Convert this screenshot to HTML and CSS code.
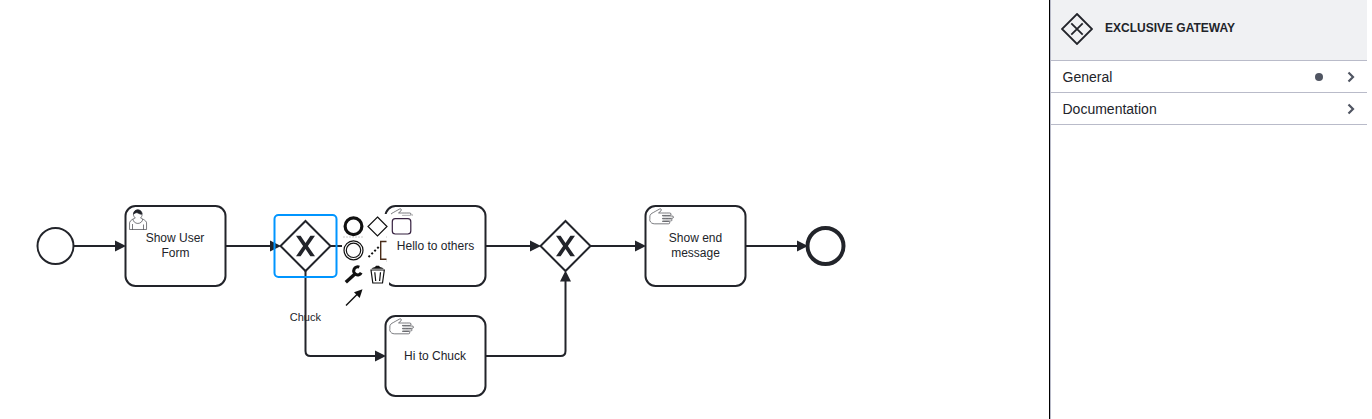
FILE: index.html
```html
<!DOCTYPE html>
<html lang="en">
<head>
<meta charset="utf-8">
<title>Process modeler</title>
<link rel="stylesheet" href="styles.css">
</head>
<body>
<div class="modeler">
<main class="canvas">
<svg class="diagram" width="1049" height="419" viewBox="0 0 1049 419">
  <defs>
    <path id="head" d="M0 -5.500 L11 0 L0 5.500 Z"/>
    <path id="hand" d="m 17,15 c 0.234,-0.01 5.604,0.008 8.029,0.004 0.808,0 1.271,-0.172 1.417,-0.752 0.227,-0.898 -0.334,-1.314 -1.338,-1.316 -2.467,-0.01 -7.886,-0.004 -8.108,-0.004 -0.014,-0.079 0.016,-0.533 0,-0.61 0.195,-0.042 8.507,0.006 9.616,0.002 0.877,-0.007 1.35,-0.438 1.353,-1.208 0.003,-0.768 -0.479,-1.09 -1.35,-1.091 -2.968,-0.002 -9.619,-0.013 -9.619,-0.013 v -0.591 c 0,0 5.052,-0.016 7.225,-0.016 0.888,-0.002 1.354,-0.416 1.351,-1.193 -0.006,-0.761 -0.492,-1.196 -1.361,-1.196 -3.473,-0.005 -10.86,-0.003 -11.083,-0.003 -0.022,-0.047 -0.045,-0.094 -0.069,-0.139 0.394,-0.319 2.041,-1.626 2.415,-2.017 0.447,-0.487 0.519,-1.165 0.162,-1.608 -0.414,-0.511 -0.973,-0.5 -1.48,-0.236 -1.461,0.764 -6.6,3.643 -7.733,4.271 -0.9,0.499 -1.516,1.253 -1.882,2.19 -0.37,0.95 -0.17,2.01 -0.166,2.979 0.004,0.718 -0.273,1.345 -0.055,2.063 0.629,2.087 2.425,3.312 4.859,3.318 4.618,0.014 9.238,-0.014 13.857,-0.016 0.755,0 1.171,-0.43 1.182,-1.184 0.011,-0.754 -0.377,-1.199 -1.14,-1.202 -1.4,-0.008 -6.084,-0.002 -6.084,-0.002 z"/>
    <path id="cross" d="M-9.500 -10.300 h4.600 L0 -3 L4.900 -10.300 h4.600 L2.400 0 L9.500 10.300 h-4.600 L0 3 L-4.900 10.300 h-4.600 L-2.400 0 Z"/>
  </defs>

  <g class="flow">
    <path d="M74 246H116M226 246H272M331 246H376M486 246H532M591 246H636M746 246H797"/>
    <path d="M305.500 271V351Q305.500 356 310.500 356H376M486 356H560.500Q565.500 356 565.500 351V280"/>
  </g>
  <g class="ink">
    <use href="#head" x="115" y="246"/>
    <use href="#head" x="270" y="246"/>
    <use href="#head" x="530" y="246"/>
    <use href="#head" x="635" y="246"/>
    <use href="#head" x="797" y="246"/>
    <use href="#head" x="375" y="356"/>
    <use href="#head" transform="translate(565.500 281.500) rotate(-90)"/>
  </g>

  <g class="shape">
    <circle cx="55.500" cy="246" r="18"/>
    <circle class="end" cx="825.500" cy="246" r="18"/>
    <rect x="125.500" y="206" width="100" height="80" rx="10"/>
    <rect x="385.500" y="206" width="100" height="80" rx="10"/>
    <rect x="385.500" y="316" width="100" height="80" rx="10"/>
    <rect x="645.500" y="206" width="100" height="80" rx="10"/>
    <path d="M305.500 221L330.500 246L305.500 271L280.500 246Z"/>
    <path d="M565.500 221L590.500 246L565.500 271L540.500 246Z"/>
  </g>
  <g class="ink">
    <use href="#cross" x="305.500" y="246"/>
    <use href="#cross" x="565.500" y="246"/>
  </g>
  <rect class="selection" x="274.500" y="215" width="62" height="62" rx="4"/>

  <g class="marker">
    <g transform="translate(125.500 206)">
      <path d="m 15,12 c 0.909,-0.845 1.594,-2.049 1.594,-3.385 0,-2.554 -1.805,-4.622 -4.357,-4.622 -2.552,0 -4.288,2.068 -4.288,4.622 0,1.348 0.974,2.562 1.896,3.405 -0.529,0.187 -5.669,2.097 -5.794,4.756 v 6.718 h 17 v -6.718 c 0,-2.298 -5.528,-4.595 -6.051,-4.776z m -8,6 l 0,5.500 m 11,0 l 0,-5"/>
      <path d="m 17.162,13.009 c 0,2.447 -2.158,4.431 -4.821,4.431 -2.665,0 -4.822,-1.981 -4.822,-4.431"/>
      <path class="ink" d="m 8.100,8.200 c 0,0 2.251,-2.358 4.274,-1.177 2.024,1.181 4.221,1.537 4.124,0.965 -0.098,-0.570 -0.117,-3.791 -4.191,-4.136 -3.572,0.001 -4.263,3.152 -4.207,4.348z"/>
    </g>
    <use href="#hand" x="385.500" y="206"/>
    <use href="#hand" x="385.500" y="316"/>
    <use href="#hand" x="645.500" y="206"/>
  </g>

  <g class="label">
    <text x="175" y="242">Show User</text>
    <text x="175.500" y="257">Form</text>
    <text x="435.500" y="250">Hello to others</text>
    <text x="435" y="360">Hi to Chuck</text>
    <text x="695.500" y="242">Show end</text>
    <text x="695.500" y="257">message</text>
    <text class="caption" x="305.300" y="321">Chuck</text>
  </g>

  <g class="pad">
    <path class="backing" d="M342 214H391V215.500H415V237H389V285H388V309H342Z"/>
    <path class="edge" d="M343 237H364M386 237H387M386 261H387M412.500 214V217"/>
    <circle cx="353.500" cy="226.300" r="8.400" stroke-width="3.200"/>
    <path d="M377.500 217L387 226.500L377.500 236L368 226.500Z"/>
    <rect class="task" x="392.300" y="218.700" width="18.500" height="15.300" rx="3"/>
    <circle cx="353.500" cy="250.300" r="9.500"/>
    <circle cx="353.500" cy="250.300" r="7.200"/>
    <path class="bracket" d="M386.500 241.500H380.700V259.300H386.500"/>
    <path class="dots" d="M368.500 257L378.700 247"/>
    <path d="M345.800 282.200L355.500 273.400" stroke-width="3.400"/>
    <path d="M359.300 267.200A4 4 0 1 0 361.200 272.800" stroke-width="3"/>
    <path class="solid" d="M371.300 268.700Q372.300 267.500 375 267L376 265.800H379L380 267Q382.700 267.500 383.900 268.700Z"/>
    <path d="M371 270H384.300L382.500 283H372.800ZM374.800 272.300L375.700 281M380.500 272.300L379.600 281"/>
    <path d="M346 305.500L358 293.500" stroke-width="1.500"/>
    <path class="solid" d="M362.500 289.300L359.700 298L354 292.300Z"/>
  </g>
</svg>
</main>
<aside class="panel">
  <header class="panel-header">
    <svg class="panel-icon" width="32" height="32" viewBox="0 0 32 32"><path d="M16 1L31 16L16 31L1 16Z"/><path d="M10.300 10.300L21.700 21.700M21.700 10.300L10.300 21.700"/></svg>
    <h1 class="panel-title">EXCLUSIVE GATEWAY</h1>
  </header>
  <section class="group">
    <span class="group-name">General</span>
    <span class="dot"></span>
    <svg class="chevron" width="8" height="12" viewBox="0 0 8 12"><path d="M1.500 1.500L6 6L1.500 10.500"/></svg>
  </section>
  <section class="group">
    <span class="group-name">Documentation</span>
    <svg class="chevron" width="8" height="12" viewBox="0 0 8 12"><path d="M1.500 1.500L6 6L1.500 10.500"/></svg>
  </section>
</aside>
</div>
</body>
</html>
```
FILE: styles.css
```css
body {
  margin: 0;
  background: #fff;
  font-family: "Liberation Sans", Arial, sans-serif;
  color: #22242a;
}
.modeler {
  display: flex;
  width: 1367px;
  height: 419px;
  overflow: hidden;
}
.canvas { flex: 1; }
.diagram { display: block; }
.flow { fill: none; stroke: #22242a; stroke-width: 2; }
.ink { fill: #22242a; }
.shape { fill: #fff; stroke: #22242a; stroke-width: 2; }
.end { stroke-width: 4; }
.selection { fill: none; stroke: #0095ff; stroke-width: 2; }
.marker { fill: #fff; stroke: #22242a; stroke-width: 0.6; }
.marker .ink { fill: #22242a; }
.label { font-size: 12px; text-anchor: middle; fill: #22242a; }
.caption { font-size: 11px; }
.pad { fill: none; stroke: #111; stroke-width: 1.2; }
.pad .backing { fill: #fff; stroke: none; }
.pad .edge { stroke: #ccc; stroke-width: 1; stroke-dasharray: 2 1; }
.pad .task { stroke: #35203f; }
.pad .bracket { stroke: #4a2c18; stroke-width: 1.4; }
.pad .solid { fill: #111; stroke: none; }
.dots { stroke-width: 2; stroke-dasharray: 2 2.1; }
.panel {
  box-sizing: border-box;
  width: 318px;
  border-left: 1px solid #000;
  background: #fff;
  box-shadow: inset 1px 0 #b9bbc9;
}
.panel-header {
  box-sizing: border-box;
  display: flex;
  align-items: center;
  gap: 12px;
  height: 61px;
  margin-left: 1px;
  padding: 0 10px 3px;
  border-bottom: 1px solid #b9bbc9;
  background: #f0f1f3;
}
.panel-icon { fill: none; stroke: #22242a; stroke-width: 1.8; }
.panel-title {
  margin: 0;
  padding-bottom: 2px;
  font-size: 12px;
  line-height: 16px;
}
.group {
  box-sizing: border-box;
  display: flex;
  align-items: center;
  height: 32px;
  margin-left: 1px;
  padding: 0 12px 0 11.5px;
  border-bottom: 1px solid #b9bbc9;
}
.group-name { flex: 1; font-size: 14px; }
.dot {
  width: 8px;
  height: 8px;
  margin-right: 24px;
  border-radius: 50%;
  background: #505562;
}
.chevron { fill: none; stroke: #505562; stroke-width: 2.2; }
```
